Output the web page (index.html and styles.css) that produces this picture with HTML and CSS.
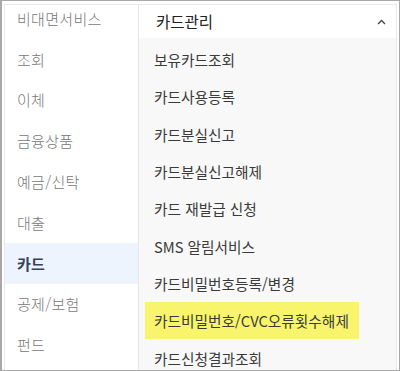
FILE: index.html
```html
<!DOCTYPE html>
<html lang="ko">
<head>
<meta charset="utf-8">
<link rel="stylesheet" href="styles.css">
</head>
<body>
<div class="frame">
  <div class="panel">
    <ul class="side">
      <li class="side-item">비대면서비스</li>
      <li class="side-item">조회</li>
      <li class="side-item">이체</li>
      <li class="side-item">금융상품</li>
      <li class="side-item">예금/신탁</li>
      <li class="side-item">대출</li>
      <li class="side-item active">카드</li>
      <li class="side-item">공제/보험</li>
      <li class="side-item">펀드</li>
    </ul>
    <div class="main">
      <div class="head">
        <span class="head-title">카드관리</span>
        <svg class="chev" width="9" height="6" viewBox="0 0 9 6"><polyline points="1,5 4.5,1.5 8,5" fill="none" stroke="#444" stroke-width="1.3"/></svg>
      </div>
      <ul class="list">
        <li class="item">보유카드조회</li>
        <li class="item">카드사용등록</li>
        <li class="item">카드분실신고</li>
        <li class="item">카드분실신고해제</li>
        <li class="item">카드 재발급 신청</li>
        <li class="item">SMS 알림서비스</li>
        <li class="item">카드비밀번호등록/변경</li>
        <li class="item hl">카드비밀번호/CVC오류횟수해제</li>
        <li class="item">카드신청결과조회</li>
      </ul>
    </div>
  </div>
</div>
</body>
</html>
```
FILE: styles.css
```css
* { box-sizing: border-box; }
html, body { margin: 0; padding: 0; background: #fff; }
body { font-family: "Noto Sans CJK KR", "Noto Sans", sans-serif; }
ul { list-style: none; margin: 0; padding: 0; }
.frame {
  width: 400px;
  height: 371px;
  border: 1px solid #a8a8a8;
  border-left-width: 2px;
  padding: 3px 2px 0 2px;
  overflow: hidden;
}
.panel {
  display: flex;
  height: 100%;
  border: 1px solid #e8e8e8;
  border-bottom: none;
  overflow: hidden;
}
.side {
  width: 134px;
  flex: none;
  border-right: 1px solid #e6e6e6;
  margin-top: -7px;
}
.side-item {
  height: 40.8px;
  display: flex;
  align-items: center;
  padding-left: 12px;
  font-size: 15px;
  font-weight: 300;
  letter-spacing: 0.3px;
  color: #777;
}
.side-item.active {
  background: #eef4fd;
  color: #35425f;
  font-weight: 700;
}
.main {
  flex: 1;
  display: flex;
  flex-direction: column;
  background: #f8f8f8;
}
.head {
  height: 35px;
  flex: none;
  background: #fff;
  display: flex;
  align-items: center;
  justify-content: space-between;
  padding: 0 10px 0 17px;
  margin-top: -2px;
}
.head-title {
  font-size: 15.5px;
  color: #222;
}
.chev { margin-top: 2px; }
.list {
  padding: 3px 0 0 6px;
}
.item {
  height: 37.3px;
  display: flex;
  align-items: center;
  width: fit-content;
  padding: 0 10px 0 9px;
  font-size: 14.7px;
  color: #3a3a3a;
}
.item.hl {
  background: #f8f56d;
}
```
